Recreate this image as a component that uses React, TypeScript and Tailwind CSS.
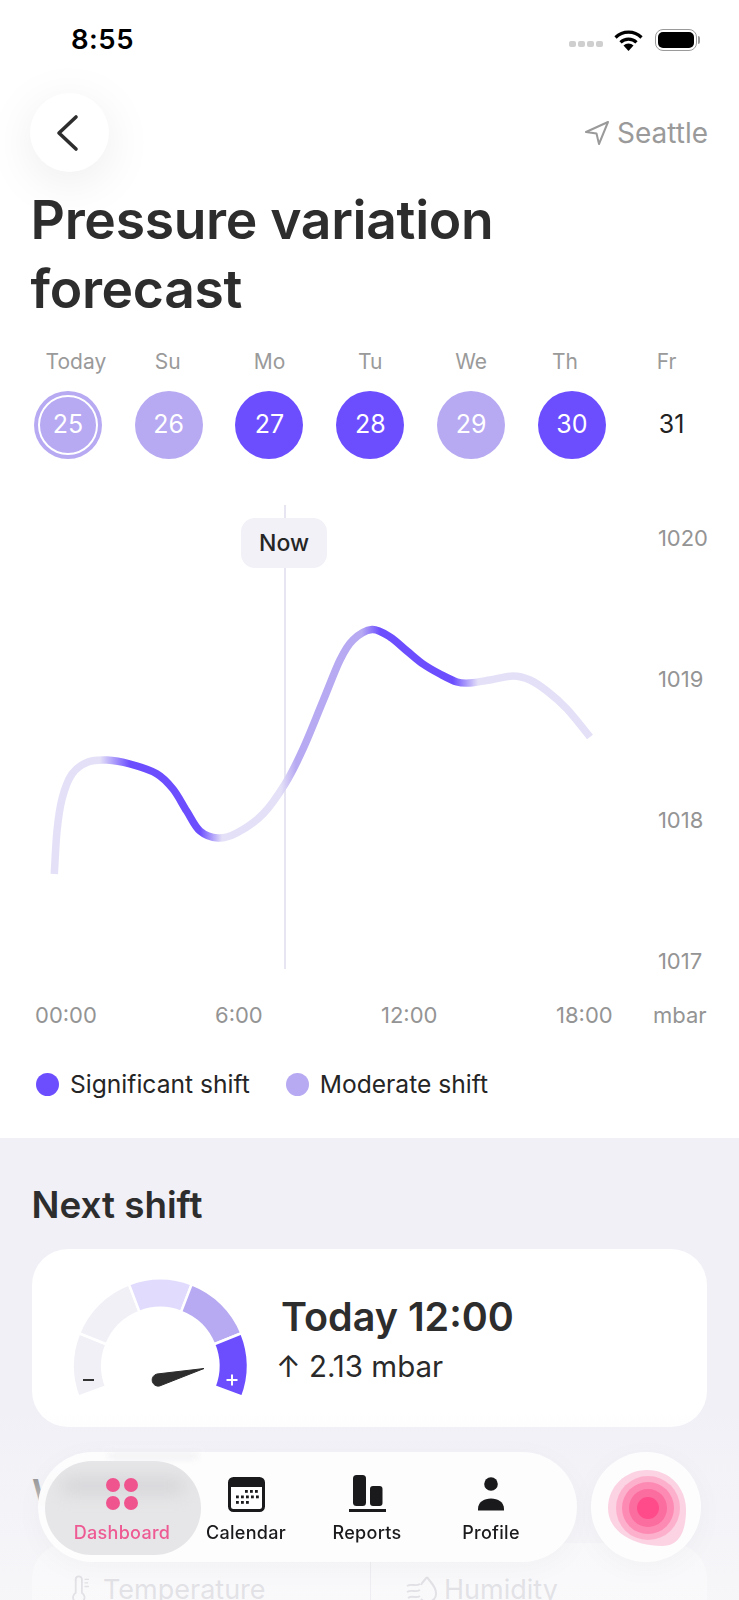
import React from "react";

const days = [
  { label: "Today", n: 25, kind: "today", shift: "translate-x-[8px]" },
  { label: "Su", n: 26, kind: "mid", shift: "-translate-x-[1px]" },
  { label: "Mo", n: 27, kind: "strong", shift: "" },
  { label: "Tu", n: 28, kind: "strong", shift: "" },
  { label: "We", n: 29, kind: "mid", shift: "" },
  { label: "Th", n: 30, kind: "strong", shift: "-translate-x-[7px]" },
  { label: "Fr", n: 31, kind: "none", shift: "-translate-x-[6px]" },
];

const curve: [number, number][] = [
  [54.3, 873], [57, 830], [62, 798], [72, 773], [88, 761], [107, 759], [130, 763], [156.7, 772.7],
  [173, 788], [186.7, 810], [200, 830], [218, 837], [236.7, 832], [263, 813], [285, 783], [303, 748],
  [323, 700], [340, 659], [353, 639], [372, 628.5], [390, 636], [407, 650], [423, 663], [440, 673],
  [457, 681], [470, 682], [490, 679], [513, 675], [530, 679], [547, 690], [567, 708], [590, 736],
];

// catmull-rom through the traced points
function smooth(pts: [number, number][]) {
  let d = `M${pts[0][0]} ${pts[0][1]}`;
  for (let i = 0; i < pts.length - 1; i++) {
    const p0 = pts[Math.max(i - 1, 0)];
    const p1 = pts[i];
    const p2 = pts[i + 1];
    const p3 = pts[Math.min(i + 2, pts.length - 1)];
    const c1x = p1[0] + (p2[0] - p0[0]) / 6;
    const c1y = p1[1] + (p2[1] - p0[1]) / 6;
    const c2x = p2[0] - (p3[0] - p1[0]) / 6;
    const c2y = p2[1] - (p3[1] - p1[1]) / 6;
    d += ` C${c1x.toFixed(1)} ${c1y.toFixed(1)} ${c2x.toFixed(1)} ${c2y.toFixed(1)} ${p2[0]} ${p2[1]}`;
  }
  return d;
}

function arcSeg(a1: number, a2: number, r1: number, r2: number, cx: number, cy: number) {
  const pt = (a: number, r: number) => {
    const t = (a * Math.PI) / 180;
    return `${(cx + r * Math.cos(t)).toFixed(2)} ${(cy - r * Math.sin(t)).toFixed(2)}`;
  };
  return `M${pt(a1, r2)} A${r2} ${r2} 0 0 1 ${pt(a2, r2)} L${pt(a2, r1)} A${r1} ${r1} 0 0 0 ${pt(a1, r1)} Z`;
}

const gaugeSegs = [
  { a: 200.6, b: 158, c: "#F1F0F7" },
  { a: 158, b: 111, c: "#F1F0F7" },
  { a: 111, b: 69, c: "#E1DCFD" },
  { a: 69, b: 22, c: "#B7A9F2" },
  { a: 22, b: -20.6, c: "#6C4EFF" },
];

function Chart() {
  return (
    <div className="relative h-[476px] mt-[36px]">
      <svg width="739" height="476" viewBox="0 494 739 476" className="block">
        <defs>
          <linearGradient id="shift" gradientUnits="userSpaceOnUse" x1="0" y1="0" x2="739" y2="0">
            <stop offset={100 / 739} stopColor="#E4E0F7" />
            <stop offset={130 / 739} stopColor="#6C4EFF" />
            <stop offset={200 / 739} stopColor="#6C4EFF" />
            <stop offset={222 / 739} stopColor="#E4E0F7" />
            <stop offset={281 / 739} stopColor="#E4E0F7" />
            <stop offset={296 / 739} stopColor="#B7A9F2" />
            <stop offset={362 / 739} stopColor="#B7A9F2" />
            <stop offset={380 / 739} stopColor="#6C4EFF" />
            <stop offset={453 / 739} stopColor="#6C4EFF" />
            <stop offset={478 / 739} stopColor="#E4E0F7" />
          </linearGradient>
        </defs>
        <line x1="285" y1="504" x2="285" y2="968" stroke="#DEDCEC" strokeWidth="1.5" />
        <path d={smooth(curve)} fill="none" stroke="url(#shift)" strokeWidth="7.5" />
      </svg>
      <div className="absolute left-[241px] top-[23px] w-[86px] h-[50px] rounded-[14px] bg-[#F2F1F7] flex items-center justify-center text-[23px] font-medium text-[#252525]">
        Now
      </div>
      <div className="absolute right-[31px] top-[28px] h-[453px] flex flex-col justify-between text-[22px] leading-[30px] text-[#949494]">
        <span>1020</span>
        <span>1019</span>
        <span>1018</span>
        <span>1017</span>
      </div>
    </div>
  );
}

function Gauge() {
  return (
    <svg width="190" height="130" viewBox="66 1270 190 130" className="shrink-0 -mt-[6px]">
      {gaugeSegs.map((s) => (
        <path key={s.a} d={arcSeg(s.a, s.b, 58, 87.5, 160.3, 1366)} fill={s.c} stroke="#fff" strokeWidth="2.5" />
      ))}
      <line x1="83" y1="1380" x2="94" y2="1380" stroke="#333" strokeWidth="2" />
      <line x1="226.5" y1="1380" x2="237.5" y2="1380" stroke="#fff" strokeWidth="2" />
      <line x1="232" y1="1374.5" x2="232" y2="1385.5" stroke="#fff" strokeWidth="2" />
      <path d="M204 1368.5 L157 1374 A6 6 0 0 0 159.5 1386 Z" fill="#2D2D2D" stroke="#2D2D2D" strokeWidth="1" strokeLinejoin="round" />
    </svg>
  );
}

function NavItem({ label, icon, active, w }: { label: string; icon: React.ReactNode; active?: boolean; w: string }) {
  return (
    <div className={`${w} flex flex-col items-center ${active ? "text-[#EE5A93]" : "text-[#1A1A1C]"}`}>
      <div className="h-[40px] flex items-center justify-center">{icon}</div>
      <span className="mt-[8px] text-[18px] leading-[22px] font-medium tracking-[0.3px] whitespace-nowrap">{label}</span>
    </div>
  );
}

export default function App() {
  return (
    <div className="relative w-[739px] h-[1600px] overflow-hidden bg-white text-[#2D2D2D] font-['Inter',sans-serif]">
      {/* status bar */}
      <div className="h-[80px] flex items-center justify-between pl-[71px] pr-[39px]">
        <span className="text-[27.5px] leading-none font-semibold text-black tracking-[0.5px]">8:55</span>
        <div className="flex items-center">
          <div className="flex gap-[2px] mt-[7px] mr-[11px]">
            <i className="block w-[7px] h-[6px] rounded-[2px] bg-[#CFCFCF]" />
            <i className="block w-[7px] h-[6px] rounded-[2px] bg-[#CFCFCF]" />
            <i className="block w-[7px] h-[6px] rounded-[2px] bg-[#CFCFCF]" />
            <i className="block w-[7px] h-[6px] rounded-[2px] bg-[#CFCFCF]" />
          </div>
          <svg width="29" height="21" viewBox="0 0 29 21" className="mr-[12px]">
            <path d="M1.5 7.5a18.5 18.5 0 0 1 26 0" fill="none" stroke="#000" strokeWidth="3.2" />
            <path d="M6.5 12.3a11.5 11.5 0 0 1 16 0" fill="none" stroke="#000" strokeWidth="3.2" />
            <path d="M9.5 15.5 a7 7 0 0 1 10 0 L14.5 21 Z" fill="#000" />
          </svg>
          <div className="w-[42px] h-[22px] rounded-[8px] border-[1.5px] border-[#9A9A9A] p-[2px]">
            <div className="w-full h-full rounded-[5px] bg-black" />
          </div>
          <div className="w-[2px] h-[8px] rounded-r-full bg-[#9A9A9A] ml-[1px]" />
        </div>
      </div>

      {/* header */}
      <div className="flex items-center justify-between pl-[30px] pr-[31px] mt-[13px]">
        <div className="w-[79px] h-[79px] rounded-full bg-white shadow-[0_10px_50px_rgba(0,0,0,0.08)] flex items-center justify-center">
          <svg width="26" height="38" viewBox="0 0 26 38" className="-ml-[6px]">
            <path d="M22 3 L5 19 L22 35" fill="none" stroke="#2D2D2D" strokeWidth="3.6" strokeLinecap="round" strokeLinejoin="round" />
          </svg>
        </div>
        <div className="flex items-center text-[#9A9A9A]">
          <svg width="26" height="26" viewBox="0 0 26 26" className="mr-[7px]">
            <path d="M24 2 L2 12 L12.5 13.5 L15 24 Z" fill="none" stroke="#9A9A9A" strokeWidth="2" strokeLinejoin="round" />
          </svg>
          <span className="text-[28px] leading-none">Seattle</span>
        </div>
      </div>

      <h1 className="pl-[30.5px] mt-[13px] text-[53.4px] leading-[69px] font-semibold tracking-[-0.3px]">
        Pressure variation
        <br />
        forecast
      </h1>

      {/* days */}
      <div className="grid grid-cols-[repeat(7,100.8px)] pl-[17.5px] mt-[25px]">
        {days.map((d) => (
          <div key={d.n} className="flex flex-col items-center">
            <span className={`text-[21px] leading-[28px] text-[#9A9A9A] ${d.shift}`}>{d.label}</span>
            <div
              className={`mt-[15px] w-[68px] h-[68px] rounded-full flex items-center justify-center text-[25px] ${
                d.kind === "strong"
                  ? "bg-[#6C4EFF] text-white"
                  : d.kind === "none"
                    ? "text-[#222222] -translate-x-[1px]"
                    : "bg-[#B7A9F2] text-white"
              }`}
            >
              {d.kind === "today" ? (
                <div className="w-[60px] h-[60px] rounded-full border-2 border-white flex items-center justify-center">{d.n}</div>
              ) : (
                d.n
              )}
            </div>
          </div>
        ))}
      </div>

      <Chart />

      {/* x axis */}
      <div className="flex pl-[35px] mt-[29px] text-[22px] leading-[30px] text-[#949494]">
        <span className="w-[180px]">00:00</span>
        <span className="w-[166px]">6:00</span>
        <span className="w-[175px]">12:00</span>
        <span className="w-[97px]">18:00</span>
        <span>mbar</span>
      </div>

      {/* legend */}
      <div className="flex items-center pl-[36px] mt-[39px] text-[24.6px] leading-[30px] text-[#252525]">
        <span className="w-[23px] h-[23px] rounded-full bg-[#6C4EFF] mr-[11px]" />
        <span className="mr-[36px]">Significant shift</span>
        <span className="w-[23px] h-[23px] rounded-full bg-[#B7A9F2] mr-[11px]" />
        <span>Moderate shift</span>
      </div>

      {/* lower panel */}
      <div className="mt-[39px] h-[463px] bg-[#F1F0F7] px-[32px] pt-[43px]">
        <h2 className="text-[36.8px] leading-[48px] font-semibold -ml-[0.5px]">Next shift</h2>
        <div className="mt-[20px] h-[178px] rounded-[36px] bg-white flex items-center pl-[34px]">
          <Gauge />
          <div className="ml-[25px] mt-[2px]">
            <div className="text-[39.5px] leading-[50px] font-semibold">Today 12:00</div>
            <div className="mt-[4px] -ml-[5px] text-[29.5px] leading-[40px] text-[#2A2A2A]">↑ 2.13 mbar</div>
          </div>
        </div>
        <h2 className="mt-[41px] text-[36px] leading-[48px] font-semibold">Weather</h2>
        <div className="mt-[27px] h-[120px] rounded-[36px] bg-white flex">
          <div className="w-[338px] h-[94px] pl-[39px] flex items-center text-[27px] text-[#8C8C9A]">
            <svg width="20" height="30" viewBox="0 0 20 34" className="mr-[12px]" fill="none" stroke="currentColor" strokeWidth="2">
              <path d="M4 20 V5 a3.5 3.5 0 0 1 7 0 V20 a6.5 6.5 0 1 1 -7 0 Z" />
              <path d="M14 5h5M14 9h4M14 13h5" strokeWidth="1.5" />
            </svg>
            Temperature
          </div>
          <div className="flex-1 h-[94px] border-l border-[#C8C8D6] pl-[35px] flex items-center text-[27px] text-[#8C8C9A]">
            <svg width="31" height="28" viewBox="0 0 31 28" className="mr-[7px]" fill="none" stroke="currentColor" strokeWidth="2">
              <path d="M1 10c5-3 8 1 13-2M1 16c5-3 8 1 13-2M2 22c5-3 8 1 12-2" />
              <path d="M21 1c3 5 9 9 9 16a8.5 8.5 0 0 1-15 6" />
              <path d="M21 1c-2 3-5 5-6 8" />
            </svg>
            Humidity
          </div>
        </div>
      </div>

      {/* fade under the floating nav */}
      <div className="absolute inset-x-0 bottom-0 h-[190px] bg-gradient-to-b from-[#F4F4F8]/0 via-[#F5F5F8]/75 to-[#F8F8FA]/80" />

      {/* floating nav */}
      <div className="absolute left-[38px] top-[1452px] w-[539px] h-[110px] rounded-[55px] bg-[#FDFDFE]/95 backdrop-blur-md flex items-start shadow-[0_6px_30px_rgba(0,0,0,0.03)]">
        <div className="absolute left-[70px] top-[1px] w-[90px] h-[6px] bg-[#ECECF0]/70 blur-[3px]" />
        <div className="absolute left-[7px] top-[9px] w-[156px] h-[94px] rounded-[47px] bg-[#E6E6E8] overflow-hidden">
          <div className="absolute left-[18px] top-[17px] w-[120px] h-[16px] bg-[#D2D2D6]/80 blur-[8px]" />
        </div>
        <div className="relative flex pt-[22px] w-full">
          <NavItem
            active
            w="w-[168px]"
            label="Dashboard"
            icon={
              <svg width="36" height="36" viewBox="0 0 36 36" fill="#F0548F">
                <circle cx="9" cy="9" r="7" />
                <circle cx="27" cy="9" r="7" />
                <circle cx="9" cy="27" r="7" />
                <circle cx="27" cy="27" r="7" />
              </svg>
            }
          />
          <NavItem
            w="w-[80px]"
            label="Calendar"
            icon={
              <svg width="37" height="35" viewBox="0 0 37 35">
                <rect x="1.5" y="1.5" width="34" height="32" rx="4" fill="#fff" stroke="#1A1A1C" strokeWidth="3" />
                <rect x="2" y="2" width="33" height="8" fill="#1A1A1C" />
                {[
                  [17, 13], [22, 13], [27, 13], [8, 18.5], [13, 18.5], [18, 18.5], [23, 18.5], [28, 18.5], [8, 24], [13, 24], [18, 24],
                ].map(([x, y]) => (
                  <rect key={`${x}-${y}`} x={x} y={y} width="2.8" height="2.8" fill="#1A1A1C" />
                ))}
              </svg>
            }
          />
          <NavItem
            w="w-[162px]"
            label="Reports"
            icon={
              <svg width="37" height="38" viewBox="0 0 37 38" fill="#1A1A1C">
                <rect x="4" y="0" width="13" height="31" rx="3.5" />
                <rect x="21" y="11" width="12.5" height="20" rx="3" />
                <rect x="0" y="34" width="37" height="3" />
              </svg>
            }
          />
          <NavItem
            w="w-[86px]"
            label="Profile"
            icon={
              <svg width="28" height="34" viewBox="0 0 28 34" fill="#1A1A1C">
                <circle cx="14" cy="7" r="6.8" />
                <path d="M1 33.5 V32 C1 25 7 21.5 14 21.5 S27 25 27 32 V33.5 Z" />
              </svg>
            }
          />
        </div>
      </div>

      {/* orb */}
      <div className="absolute left-[591px] top-[1452px] w-[110px] h-[110px] rounded-full bg-[#FDFDFE] shadow-[0_6px_30px_rgba(0,0,0,0.03)]">
        <svg width="110" height="110" viewBox="591 1452 110 110">
          <path d="M647 1470 C670 1470 686 1488 686 1510 C686 1530 680 1546 662 1546 C634 1546 608 1532 608 1508 C608 1486 626 1470 647 1470Z" fill="#FBD3E2" />
          <circle cx="648" cy="1508" r="32" fill="#FDB0CC" />
          <circle cx="648" cy="1508" r="26" fill="#FC8AB2" />
          <circle cx="648" cy="1508" r="19" fill="#FB6C9F" />
          <circle cx="648" cy="1508" r="11" fill="#FF4B8A" />
        </svg>
      </div>
    </div>
  );
}
